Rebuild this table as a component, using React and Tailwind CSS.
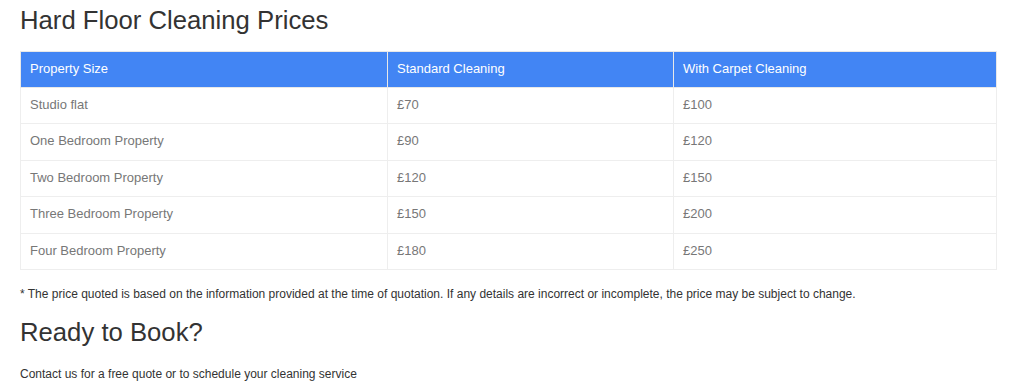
const rows = [
  ["Studio flat", "£70", "£100"],
  ["One Bedroom Property", "£90", "£120"],
  ["Two Bedroom Property", "£120", "£150"],
  ["Three Bedroom Property", "£150", "£200"],
  ["Four Bedroom Property", "£180", "£250"],
];

const App = () => {
  return (
    <div className="min-h-screen bg-white px-5 font-['Liberation_Sans',Arial,sans-serif]">
      <h2 className="pt-[4px] text-[25.7px] leading-[32px] text-[#333]">Hard Floor Cleaning Prices</h2>
      <table className="mt-[15px] w-[977px] table-fixed border-collapse text-[13px]">
        <colgroup>
          <col className="w-[367px]" />
          <col className="w-[286px]" />
          <col />
        </colgroup>
        <thead>
          <tr className="bg-[#4285f4] text-white">
            <th className="h-[36px] border border-[#e8e8e8] px-[9px] pb-[2px] text-left font-normal">Property Size</th>
            <th className="h-[36px] border border-[#e8e8e8] px-[9px] pb-[2px] text-left font-normal">Standard Cleaning</th>
            <th className="h-[36px] border border-[#e8e8e8] px-[9px] pb-[2px] text-left font-normal">With Carpet Cleaning</th>
          </tr>
        </thead>
        <tbody className="text-[#777]">
          {rows.map((r) => (
            <tr key={r[0]}>
              {r.map((c, i) => (
                <td key={i} className="h-[36.4px] border border-[#eee] px-[9px] pb-[2px]">
                  {c}
                </td>
              ))}
            </tr>
          ))}
        </tbody>
      </table>
      <p className="mt-[15px] text-[12px] leading-[18px] text-[#333]">
        * The price quoted is based on the information provided at the time of quotation. If any details are incorrect or incomplete, the price may be subject to change.
      </p>
      <h2 className="mt-[13px] text-[25.7px] leading-[32px] text-[#333]">Ready to Book?</h2>
      <p className="mt-[17px] text-[12px] leading-[18px] text-[#333]">
        Contact us for a free quote or to schedule your cleaning service
      </p>
    </div>
  );
};

export default App;
